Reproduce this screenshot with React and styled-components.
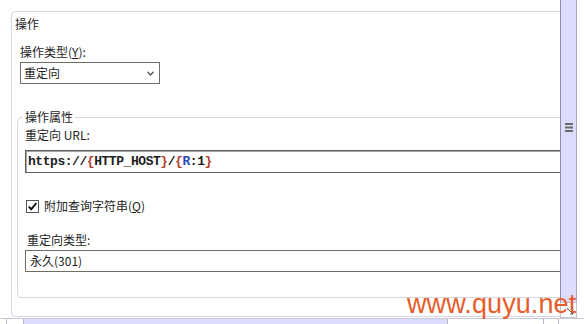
import React from 'react';
import styled, { createGlobalStyle } from 'styled-components';

const GlobalStyle = createGlobalStyle`
  html, body {
    margin: 0;
    padding: 0;
    background: #fff;
  }
  body {
    font-family: "Noto Sans CJK SC", "Noto Sans", sans-serif;
    font-size: 12px;
    color: #1e1e1e;
  }
`;

const Screen = styled.div`
  position: relative;
  width: 584px;
  height: 324px;
  overflow: hidden;
  display: flex;
  flex-direction: column;
  background: #fff;
`;

const Upper = styled.div`
  display: flex;
  height: 318px;
`;

const Viewport = styled.div`
  width: 560px;
  flex: none;
  overflow: hidden;
  padding: 11px 0 0 11px;
  box-sizing: border-box;
`;

const GroupBox = styled.div`
  width: 640px;
  height: 306px;
  box-sizing: border-box;
  border: 1px solid #d6d6e2;
  border-radius: 4px;
  padding: 4px 0 0 3px;
`;

const Title = styled.div`
  line-height: 16px;
`;

const Label = styled.div`
  line-height: 16px;
  margin-top: ${p => p.$top || 0}px;
  margin-left: ${p => p.$left || 0}px;

  u {
    text-decoration: underline;
    text-underline-offset: 1px;
  }
`;

const Select = styled.div`
  margin: 2px 0 0 5px;
  width: 140px;
  height: 22px;
  box-sizing: border-box;
  border: 1px solid #6e6e62;
  display: flex;
  align-items: center;
  justify-content: space-between;
  padding: 0 5px 0 3px;
  line-height: 16px;
`;

const Fieldset = styled.fieldset`
  margin: 26px 0 0 2px;
  padding: 3px 0 25px 7px;
  border: 1px solid #d6d6e2;
  border-radius: 4px;
  min-width: 0;
`;

const Legend = styled.legend`
  padding: 0 2px;
  margin-left: -2px;
  line-height: 14px;
`;

const UrlInput = styled.div`
  margin-top: 7px;
  height: 23px;
  box-sizing: border-box;
  border: 1px solid #5f5f5f;
  border-right-color: #9a9a9a;
  box-shadow: inset 1px 1px 0 #a6a6a6;
  display: flex;
  align-items: center;
  padding-left: 2px;
  font-family: "Liberation Mono", "Courier New", monospace;
  font-size: 13px;
  letter-spacing: -0.45px;
  font-weight: bold;
  color: #202020;
  white-space: pre;
`;

const Tok = styled.span`
  color: ${p => (p.$kind === 'brace' ? '#b23a2a' : p.$kind === 'var' ? '#2848b8' : '#202020')};
`;

const CheckRow = styled.label`
  margin-top: 25px;
  display: flex;
  align-items: center;
  gap: 5px;
  line-height: 16px;
  padding-left: 1px;

  u {
    text-decoration: underline;
    text-underline-offset: 1px;
  }
`;

const Box = styled.span`
  width: 13px;
  height: 13px;
  box-sizing: border-box;
  border: 1px solid #555;
  display: flex;
  align-items: center;
  justify-content: center;
  background: #fff;
`;

const ValueBox = styled.div`
  margin-top: 2px;
  height: 22px;
  box-sizing: border-box;
  border: 1px solid #6e6e62;
  display: flex;
  align-items: center;
  padding-left: 4px;
  line-height: 16px;
`;

const VScroll = styled.div`
  width: 17px;
  flex: none;
  display: flex;
  flex-direction: column;
  box-sizing: border-box;
`;

const Track = styled.div`
  flex: 1;
  background: #dcdcfc;
  border-left: 1px solid #8c8cae;
  border-right: 1px solid #a8a8c4;
  display: flex;
  justify-content: center;
  padding-top: 123px;
`;

const Corner = styled.div`
  height: 16px;
  box-sizing: border-box;
  border: 1px solid #c4c4cc;
  background: #fff;
  display: flex;
  align-items: flex-end;
  justify-content: flex-end;
  padding: 0 2px 2px 0;
`;

const HScroll = styled.div`
  height: 6px;
  display: flex;
  border-top: 1px solid #c8c8d4;
  box-sizing: border-box;
`;

const HCell = styled.div`
  width: ${p => p.$w}px;
  flex: ${p => (p.$w ? 'none' : 1)};
  background: ${p => p.$bg || '#fff'};
  border-left: ${p => (p.$edge ? '1px solid #b8b8c8' : 'none')};
  box-sizing: border-box;
`;

const Watermark = styled.div`
  position: absolute;
  left: 407px;
  top: 289px;
  font-family: "Liberation Sans", Arial, sans-serif;
  font-size: 27px;
  line-height: 30px;
  color: #e95c2c;
  letter-spacing: 0.1px;
`;

function Chevron() {
  return (
    <svg width="7" height="5" viewBox="0 0 7 5">
      <path d="M0.5 0.8 L3.5 4 L6.5 0.8" fill="none" stroke="#5a5a5a" strokeWidth="1.4" />
    </svg>
  );
}

function Check() {
  return (
    <svg width="11" height="11" viewBox="0 0 11 11">
      <path d="M1.8 5.6 L4.3 8.3 L9.3 2" fill="none" stroke="#111" strokeWidth="2" />
    </svg>
  );
}

function Grip() {
  return (
    <svg width="8" height="9" viewBox="0 0 8 9">
      <rect x="0" y="0" width="8" height="2" fill="#6a6a6a" />
      <rect x="0" y="3.5" width="8" height="2" fill="#6a6a6a" />
      <rect x="0" y="7" width="8" height="2" fill="#6a6a6a" />
    </svg>
  );
}

function ResizeGrip() {
  return (
    <svg width="8" height="8" viewBox="0 0 8 8">
      <path d="M1 1 L7 7 M4 7 L7 7 L7 4" fill="none" stroke="#555" strokeWidth="1" />
    </svg>
  );
}

export default function App() {
  return (
    <>
      <GlobalStyle />
      <Screen>
        <Upper>
          <Viewport>
            <GroupBox>
              <Title>操作</Title>
              <Label $top={12} $left={5}>
                操作类型(<u>Y</u>):
              </Label>
              <Select>
                <span>重定向</span>
                <Chevron />
              </Select>
              <Fieldset>
                <Legend>操作属性</Legend>
                <Label>重定向 URL:</Label>
                <UrlInput>
                  <Tok>https://</Tok>
                  <Tok $kind="brace">{'{'}</Tok>
                  <Tok>HTTP_HOST</Tok>
                  <Tok $kind="brace">{'}'}</Tok>
                  <Tok>/</Tok>
                  <Tok $kind="brace">{'{'}</Tok>
                  <Tok $kind="var">R</Tok>
                  <Tok>:1</Tok>
                  <Tok $kind="brace">{'}'}</Tok>
                </UrlInput>
                <CheckRow>
                  <Box>
                    <Check />
                  </Box>
                  <span>
                    附加查询字符串(<u>Q</u>)
                  </span>
                </CheckRow>
                <Label $top={18} $left={2}>
                  重定向类型:
                </Label>
                <ValueBox>永久(301)</ValueBox>
              </Fieldset>
            </GroupBox>
          </Viewport>
          <VScroll>
            <Track>
              <Grip />
            </Track>
            <Corner>
              <ResizeGrip />
            </Corner>
          </VScroll>
        </Upper>
        <HScroll>
          <HCell $w={6} />
          <HCell $w={17} $edge />
          <HCell $w={424} $bg="#dcdcfc" $edge />
          <HCell $w={96} $edge />
          <HCell $w={15} $edge />
          <HCell $edge />
        </HScroll>
        <Watermark>www.quyu.net</Watermark>
      </Screen>
    </>
  );
}
